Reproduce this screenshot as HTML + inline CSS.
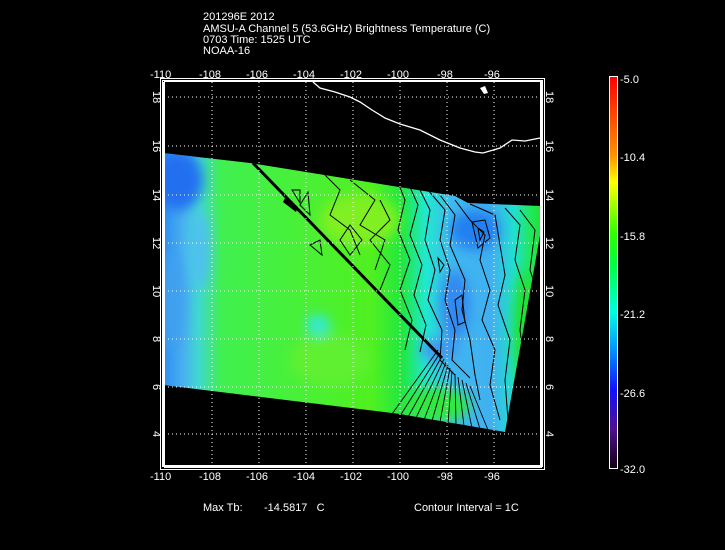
<!DOCTYPE html>
<html><head><meta charset="utf-8"><style>
html,body{margin:0;padding:0;background:#000;}
body{width:725px;height:550px;overflow:hidden;position:relative;font-family:"Liberation Sans",sans-serif;color:#fff;}
.t{position:absolute;font-size:11px;line-height:11px;white-space:nowrap;}
</style></head><body>
<div class="t" style="left:203px;top:12px">201296E 2012</div>
<div class="t" style="left:203px;top:24px">AMSU-A Channel 5 (53.6GHz) Brightness Temperature (C)</div>
<div class="t" style="left:203px;top:35px">0703 Time: 1525 UTC</div>
<div class="t" style="left:203px;top:46px">NOAA-16</div>
<div class="t" style="left:203px;top:503px">Max Tb:</div>
<div class="t" style="left:264px;top:503px">-14.5817&nbsp;&nbsp;&nbsp;C</div>
<div class="t" style="left:414px;top:503px">Contour Interval = 1C</div>

<svg width="725" height="550" style="position:absolute;left:0;top:0" xmlns="http://www.w3.org/2000/svg">
<defs>
<clipPath id="sw"><polygon points="163,153 250,163 455,196 468,203 540,206 541,230 505,432 400,414 163,385"/></clipPath>
<linearGradient id="bg" x1="0" x2="1" y1="0" y2="0">
<stop offset="0" stop-color="#2a88f0"/><stop offset="0.06" stop-color="#48b0f0"/>
<stop offset="0.1" stop-color="#40d8d0"/><stop offset="0.16" stop-color="#40f050"/>
<stop offset="0.55" stop-color="#50f020"/><stop offset="0.63" stop-color="#20e840"/>
<stop offset="0.69" stop-color="#20e8d0"/><stop offset="0.76" stop-color="#40b8f0"/>
<stop offset="0.86" stop-color="#40b0f0"/><stop offset="0.92" stop-color="#20e0d0"/>
<stop offset="0.96" stop-color="#20e860"/>
<stop offset="1" stop-color="#20e020"/></linearGradient>
<linearGradient id="cb" x1="0" x2="0" y1="0" y2="1">
<stop offset="0" stop-color="#ff0000"/><stop offset="0.2" stop-color="#ff9000"/>
<stop offset="0.27" stop-color="#ffff00"/><stop offset="0.4" stop-color="#30ff00"/>
<stop offset="0.48" stop-color="#00ff40"/><stop offset="0.6" stop-color="#00ffe0"/>
<stop offset="0.7" stop-color="#0090ff"/><stop offset="0.8" stop-color="#1010ff"/>
<stop offset="0.9" stop-color="#501090"/><stop offset="1" stop-color="#100010"/></linearGradient>
<filter id="bl"><feGaussianBlur stdDeviation="6"/></filter>
</defs>
<g clip-path="url(#sw)">
<rect x="160" y="150" width="385" height="285" fill="url(#bg)"/>
<g filter="url(#bl)">
<ellipse cx="178" cy="180" rx="25" ry="30" fill="#2070f0"/>
<ellipse cx="172" cy="300" rx="12" ry="50" fill="#40a0f0"/>
<ellipse cx="200" cy="250" rx="10" ry="40" fill="#50c0f0"/>
<ellipse cx="318" cy="325" rx="12" ry="10" fill="#30e8e0"/>
<ellipse cx="475" cy="230" rx="25" ry="20" fill="#2080f0"/>
<ellipse cx="455" cy="305" rx="15" ry="35" fill="#3088f0"/>
<ellipse cx="440" cy="350" rx="20" ry="12" fill="#4098f0"/>
<ellipse cx="360" cy="220" rx="40" ry="25" fill="#80f020"/>
<ellipse cx="330" cy="360" rx="40" ry="25" fill="#60f030"/>
<ellipse cx="435" cy="405" rx="35" ry="18" fill="#30e840"/>
<ellipse cx="525" cy="330" rx="12" ry="60" fill="#20e030"/>
</g>
<g fill="none" stroke="#000" stroke-width="1">
<polyline points="395,175 405,200 398,230 410,260 400,290 412,320 405,350"/>
<polyline points="405,176 418,205 410,235 422,265 414,295 426,325 420,352"/>
<polyline points="415,180 430,210 425,240 435,270 428,300 442,330 440,360 455,375"/>
<polyline points="428,190 445,210 440,240 450,270 445,300 455,330 452,360 470,378"/>
<polyline points="440,195 455,215 450,245 465,280 462,310 470,340 475,375 480,400"/>
<polyline points="455,200 470,220 485,235 480,260 490,290 482,320 495,350 490,385 500,420"/>
<polyline points="470,204 495,215 500,245 505,275 498,305 510,340 505,380 508,420"/>
<polyline points="505,208 520,225 515,260 525,290 520,330 525,370 515,420"/>
<polyline points="520,210 535,230 530,270 540,300"/>
<polygon points="472,222 485,220 490,238 478,248"/>
<polygon points="478,228 484,232 480,240"/>
<polygon points="438,258 444,265 440,272"/>
<polygon points="455,300 462,295 465,322 458,325"/>
<polygon points="292,190 300,190 300,203"/>
<polygon points="300,205 308,192 310,215"/>
<polyline points="320,170 340,190 330,215 350,230 360,255"/>
<polyline points="350,180 375,200 360,225 385,240 375,270"/>
<polyline points="380,200 390,220 370,240 390,265 380,290"/>
<polygon points="350,225 362,240 350,255 340,240"/>
<polygon points="310,245 320,240 322,255"/>
</g>
<g fill="none" stroke="#000" stroke-width="0.9">
<line x1="438" y1="350" x2="392" y2="414"/><line x1="440" y1="353" x2="400" y2="416"/>
<line x1="442" y1="356" x2="408" y2="417"/><line x1="444" y1="359" x2="416" y2="418"/>
<line x1="446" y1="362" x2="424" y2="420"/><line x1="448" y1="365" x2="432" y2="421"/>
<line x1="450" y1="368" x2="440" y2="422"/><line x1="452" y1="371" x2="448" y2="424"/>
<line x1="455" y1="374" x2="456" y2="425"/><line x1="458" y1="377" x2="464" y2="426"/>
<line x1="462" y1="380" x2="472" y2="428"/><line x1="466" y1="383" x2="480" y2="429"/>
<line x1="470" y1="386" x2="488" y2="430"/>
</g>
<line x1="253" y1="163" x2="442" y2="358" stroke="#000" stroke-width="3"/>
<polygon points="285,198 298,207 296,212 283,202" fill="#000"/>
</g>
<polyline fill="none" stroke="#fff" stroke-width="1.3" points="313,82 320,88 335,92 350,97 360,102 372,110 385,118 400,124 420,130 440,140 460,148 475,152 483,153 500,148 512,140 525,141 540,138"/>
<polygon points="480,88 485,86 488,93 484,94" fill="#fff"/>
<g stroke="#fff" stroke-width="1" stroke-dasharray="1,3">
<line x1="212" y1="82" x2="212" y2="466"/><line x1="259" y1="82" x2="259" y2="466"/>
<line x1="306" y1="82" x2="306" y2="466"/><line x1="353" y1="82" x2="353" y2="466"/>
<line x1="400" y1="82" x2="400" y2="466"/><line x1="447" y1="82" x2="447" y2="466"/>
<line x1="494" y1="82" x2="494" y2="466"/>
<line x1="164" y1="97" x2="541" y2="97"/><line x1="164" y1="146" x2="541" y2="146"/>
<line x1="164" y1="195" x2="541" y2="195"/><line x1="164" y1="243" x2="541" y2="243"/>
<line x1="164" y1="291" x2="541" y2="291"/><line x1="164" y1="339" x2="541" y2="339"/>
<line x1="164" y1="387" x2="541" y2="387"/><line x1="164" y1="434" x2="541" y2="434"/>
</g>
<rect x="160.5" y="78.5" width="384" height="391" fill="none" stroke="#fff"/>
<rect x="162.5" y="80.5" width="380" height="386" fill="none" stroke="#fff"/>
<rect x="164" y="465" width="378" height="3" fill="#fff"/>
<rect x="164" y="80" width="378" height="2" fill="#fff"/>
<rect x="162" y="82" width="3" height="384" fill="#fff"/>
<rect x="540" y="82" width="3" height="384" fill="#fff"/>
<rect x="609.5" y="76.5" width="8" height="392" fill="url(#cb)" stroke="#fff"/>
<g fill="#fff" font-family="Liberation Sans, sans-serif" font-size="11">
<text x="150" y="78">-110</text><text x="199" y="78">-108</text><text x="246" y="78">-106</text>
<text x="293" y="78">-104</text><text x="340" y="78">-102</text><text x="387" y="78">-100</text>
<text x="437" y="78">-98</text><text x="484" y="78">-96</text>
<text x="150" y="480">-110</text><text x="199" y="480">-108</text><text x="246" y="480">-106</text>
<text x="293" y="480">-104</text><text x="340" y="480">-102</text><text x="387" y="480">-100</text>
<text x="437" y="480">-98</text><text x="484" y="480">-96</text>
<text x="620" y="83">-5.0</text><text x="620" y="161">-10.4</text><text x="620" y="240">-15.8</text>
<text x="620" y="318">-21.2</text><text x="620" y="397">-26.6</text><text x="620" y="473">-32.0</text>
<g transform="translate(153,91) rotate(90)"><text>18</text></g>
<g transform="translate(153,140) rotate(90)"><text>16</text></g>
<g transform="translate(153,189) rotate(90)"><text>14</text></g>
<g transform="translate(153,237) rotate(90)"><text>12</text></g>
<g transform="translate(153,285) rotate(90)"><text>10</text></g>
<g transform="translate(153,336) rotate(90)"><text>8</text></g>
<g transform="translate(153,384) rotate(90)"><text>6</text></g>
<g transform="translate(153,431) rotate(90)"><text>4</text></g>
<g transform="translate(546,91) rotate(90)"><text>18</text></g>
<g transform="translate(546,140) rotate(90)"><text>16</text></g>
<g transform="translate(546,189) rotate(90)"><text>14</text></g>
<g transform="translate(546,237) rotate(90)"><text>12</text></g>
<g transform="translate(546,285) rotate(90)"><text>10</text></g>
<g transform="translate(546,336) rotate(90)"><text>8</text></g>
<g transform="translate(546,384) rotate(90)"><text>6</text></g>
<g transform="translate(546,431) rotate(90)"><text>4</text></g>
</g>
</svg>
</body></html>
